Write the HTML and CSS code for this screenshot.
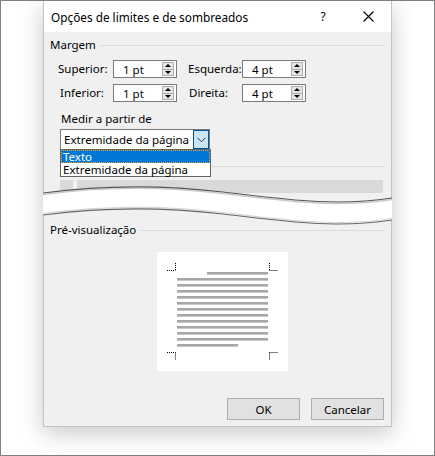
FILE: index.html
```html
<!DOCTYPE html>
<html lang="pt">
<head>
  <meta charset="UTF-8">
  <title>Opções de limites e de sombreados</title>
  <link rel="stylesheet" href="styles.css">
</head>
<body>
  <div class="frame">
    <div class="dialog">
      <div class="titlebar">
        <span class="title">Opções de limites e de sombreados</span>
        <span class="help">?</span>
        <svg class="close" width="11" height="11" viewBox="0 0 11 11">
          <path d="M0.5 0.5 L10.5 10.5 M10.5 0.5 L0.5 10.5" stroke="#000" stroke-width="1.1"/>
        </svg>
      </div>

      <div class="body">
        <div class="group-head"><span>Margem</span><i class="rule"></i></div>

        <div class="margins">
          <label>Superior:</label>
          <div class="spin"><span class="spin-value">1 pt</span><span class="spinner"><b class="up"></b><b class="down"></b></span></div>
          <label class="right">Esquerda:</label>
          <div class="spin"><span class="spin-value">4 pt</span><span class="spinner"><b class="up"></b><b class="down"></b></span></div>
          <label class="shift">Inferior:</label>
          <div class="spin"><span class="spin-value">1 pt</span><span class="spinner"><b class="up"></b><b class="down"></b></span></div>
          <label class="right shift">Direita:</label>
          <div class="spin"><span class="spin-value">4 pt</span><span class="spinner"><b class="up"></b><b class="down"></b></span></div>
        </div>

        <div class="measure">
          <div class="caption">Medir a partir de</div>
          <div class="combo">
            <span class="combo-value">Extremidade da página</span>
            <span class="combo-btn">
              <svg width="9" height="6" viewBox="0 0 9 6">
                <path d="M0.5 0.8 L4.5 4.8 L8.5 0.8" fill="none" stroke="#333" stroke-width="1"/>
              </svg>
            </span>
            <ul class="combo-list">
              <li class="selected">Texto</li>
              <li>Extremidade da página</li>
            </ul>
          </div>
        </div>

        <div class="group-head blank"><i class="rule"></i></div>

        <!-- corte da janela: a faixa branca ondulada -->
        <svg class="tear" width="349" height="48" viewBox="0 0 349 48">
          <rect x="17" y="6" width="13" height="13" fill="#d9d9d9"/>
          <rect x="34" y="6" width="306" height="13" fill="#d9d9d9"/>
          <path d="M0 19 C60 11 120 11 180 18 S290 33 349 24 L349 46 C290 55 240 47 180 40 C120 33 60 33 0 41 Z" fill="#fff"/>
          <path d="M0 20.5 C60 12.5 120 12.5 180 19.5 S290 34.5 349 25.5" fill="none" stroke="#c8c8c8" stroke-width="1.4"/>
          <path d="M0 19 C60 11 120 11 180 18 S290 33 349 24" fill="none" stroke="#555" stroke-width="1.1"/>
          <path d="M0 39.5 C60 31.5 120 31.5 180 38.5 S290 53.5 349 44.5" fill="none" stroke="#d4d4d4" stroke-width="1.2"/>
          <path d="M0 41 C60 33 120 33 180 40 S290 55 349 46" fill="none" stroke="#666" stroke-width="1.1"/>
        </svg>

        <div class="group-head"><span>Pré-visualização</span><i class="rule"></i></div>

        <div class="preview">
          <svg width="131" height="119" viewBox="0 0 131 119">
            <g stroke="#000" stroke-width="1" stroke-dasharray="1 1" fill="none">
              <path d="M10 18.5 H18.5 M18.5 11 V18.5"/>
              <path d="M112.5 11 V18.5 M112.5 18.5 H121"/>
              <path d="M10 100.5 H18.5 M18.5 100.5 V108"/>
              <path d="M112.5 100.5 V108 M112.5 100.5 H121"/>
            </g>
            <g fill="#a6a6a6">
              <rect x="50" y="20" width="61" height="2.6"/>
              <rect x="20" y="26" width="91" height="2.6"/>
              <rect x="20" y="32" width="91" height="2.6"/>
              <rect x="20" y="38" width="91" height="2.6"/>
              <rect x="20" y="44" width="91" height="2.6"/>
              <rect x="20" y="50" width="91" height="2.6"/>
              <rect x="20" y="56" width="91" height="2.6"/>
              <rect x="20" y="62" width="91" height="2.6"/>
              <rect x="20" y="68" width="91" height="2.6"/>
              <rect x="20" y="74" width="91" height="2.6"/>
              <rect x="20" y="80" width="91" height="2.6"/>
              <rect x="20" y="86" width="91" height="2.6"/>
              <rect x="20" y="92" width="61" height="2.6"/>
            </g>
          </svg>
        </div>

        <div class="actions">
          <button>OK</button>
          <button>Cancelar</button>
        </div>
      </div>
    </div>
  </div>
</body>
</html>
```

FILE: styles.css
```css
* {
  box-sizing: border-box;
}
body {
  margin: 0;
  background-color: #fff;
  font-family: "Noto Sans", "Open Sans", sans-serif;
  font-size: 11.5px;
  color: #000;
}
.frame {
  width: 435px;
  height: 456px;
  border: 1px solid #7f7f7f;
  overflow: hidden;
  padding-left: 42px;
  background-color: #fff;
}
.dialog {
  width: 349px;
  background-color: #f0f0f0;
  border: 1px solid #c4c4c4;
  border-top: none;
  box-shadow: 0 6px 22px rgba(0, 0, 0, 0.22);
}
.titlebar {
  height: 31px;
  background-color: #fff;
  display: flex;
  align-items: center;
  padding: 0 17px 0 7px;
}
.title {
  flex: 1;
  font-size: 11.8px;
}
.help {
  width: 14px;
  text-align: center;
  margin-right: 33px;
  font-size: 12px;
}
.close {
  display: block;
}

.body {
  padding: 5px 6px 6px 6px;
}
.group-head {
  display: flex;
  align-items: center;
  height: 16px;
  line-height: 16px;
  white-space: nowrap;
}
.group-head span {
  margin-right: 4px;
}
.group-head .rule {
  flex: 1;
  height: 1px;
  background-color: #dcdcdc;
}
.group-head.blank {
  margin-top: 8px;
  padding-left: 50px;
}

/* margens */
.margins {
  display: grid;
  grid-template-columns: 55px 64px 65px 64px;
  grid-auto-rows: 18px;
  row-gap: 6px;
  margin: 7px 0 0 8px;
}
.margins label {
  line-height: 18px;
  white-space: nowrap;
}
.margins .right {
  padding-left: 11px;
}
.margins .shift {
  padding-left: 2px;
}
.margins .right.shift {
  padding-left: 12px;
}
.spin {
  display: flex;
  align-items: center;
  height: 18px;
  background-color: #fff;
  border: 1px solid #7a7a7a;
}
.spin-value {
  flex: 1;
  padding-left: 9px;
}
.spinner {
  display: flex;
  flex-direction: column;
  width: 12px;
  height: 14px;
  margin-right: 2px;
  border: 1px solid #adadad;
  background-color: #e5e5e5;
}
.spinner b {
  flex: 1;
  display: flex;
  align-items: center;
  justify-content: center;
}
.spinner .up {
  border-bottom: 1px solid #adadad;
}
.spinner b::after {
  content: "";
  border-left: 3px solid transparent;
  border-right: 3px solid transparent;
}
.spinner .up::after {
  border-bottom: 3px solid #000;
}
.spinner .down::after {
  border-top: 3px solid #000;
}

/* medir a partir de */
.measure {
  margin: 9px 0 0 10px;
}
.caption {
  line-height: 16px;
  padding-left: 1px;
}
.combo {
  position: relative;
  display: flex;
  align-items: center;
  width: 150px;
  height: 21px;
  margin-top: 2px;
  background-color: #fff;
  border: 1px solid #7a7a7a;
  white-space: nowrap;
}
.combo-value {
  flex: 1;
  padding-left: 3px;
}
.combo-btn {
  display: flex;
  align-items: center;
  justify-content: center;
  width: 16px;
  height: 19px;
  background-color: #cce4f7;
  border: 1px solid #005499;
}
.combo-list {
  position: absolute;
  top: 19px;
  left: -1px;
  width: 151px;
  margin: 0;
  padding: 0;
  list-style: none;
  background-color: #fff;
  border: 1px solid #646464;
  z-index: 10;
}
.combo-list li {
  height: 13px;
  line-height: 13px;
  padding-left: 2px;
}
.combo-list .selected {
  background-color: #0078d7;
  color: #fff;
  outline: 1px dotted #f0a030;
  outline-offset: -1px;
}

.tear {
  display: block;
  margin: 0 -7px;
  overflow: visible;
}

.preview {
  width: 131px;
  height: 119px;
  margin: 14px 0 0 107px;
  background-color: #fff;
}
.preview svg {
  display: block;
}

.actions {
  display: flex;
  justify-content: flex-end;
  gap: 11px;
  margin-top: 27px;
  padding-right: 1px;
}
.actions button {
  width: 73px;
  height: 22px;
  padding: 0;
  font-family: inherit;
  font-size: 11.5px;
  color: #000;
  background-color: #e1e1e1;
  border: 1px solid #adadad;
}
```
